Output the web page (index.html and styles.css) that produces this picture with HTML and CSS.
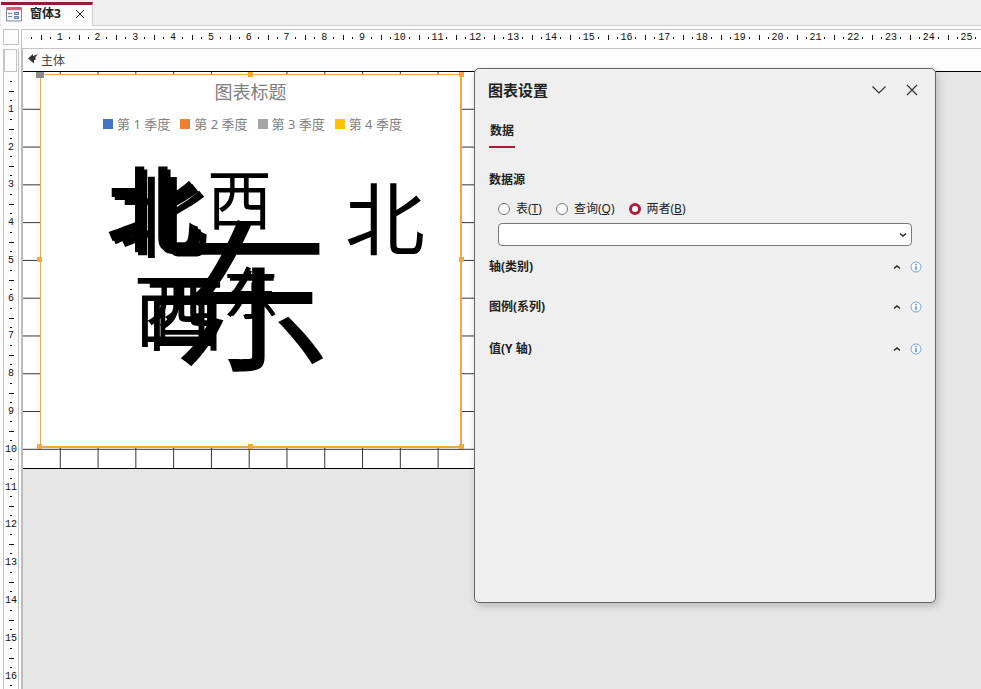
FILE: index.html
```html
<!DOCTYPE html>
<html lang="zh-CN">
<head>
<meta charset="utf-8">
<title>窗体3</title>
<link rel="stylesheet" href="styles.css">
</head>
<body>
<header class="tabs">
  <div class="tab">
    <svg class="form-icon" width="16" height="16" viewBox="0 0 16 16" aria-hidden="true">
      <path d="M.5 1.500h15v13.500H.5z" fill="#f4f4fb" stroke="#7f86a8"/>
      <path d="M1 1h14v3H1z" fill="#d0607c"/>
      <path d="M2 7.500h4M2 10.500h4" stroke="#7884b8"/>
      <path d="M8.500 6.500h4v2h-4zM8.500 10.500h4v2h-4z" fill="#c5cbea" stroke="#6672ad"/>
    </svg>
    <span class="tab-name">窗体3</span>
    <button class="icon-button tab-close" type="button" aria-label="关闭窗体">
      <svg width="10" height="10" viewBox="0 0 10 10"><path d="M1 1l8 8M9 1l-8 8" stroke="#222" fill="none"/></svg>
    </button>
  </div>
</header>
<main class="designer">
  <div class="corner"><span class="corner-box"></span></div>
  <div class="ruler-x" data-count="25"></div>
  <div class="ruler-side">
    <div class="section-selector"></div>
    <div class="ruler-y" data-count="16"></div>
  </div>
  <div class="workspace">
    <div class="section-bar">
      <svg width="10" height="10" viewBox="0 0 10 10" aria-hidden="true"><path d="M0 4.500L5 0v2L10 0 7.500 3v3H6v3.500z" fill="#333"/></svg>
      <span>主体</span>
    </div>
    <section class="detail">
      <div class="chart">
        <h2 class="chart-title">图表标题</h2>
        <ul class="legend">
          <li><i class="swatch blue"></i>第 1 季度</li>
          <li><i class="swatch orange"></i>第 2 季度</li>
          <li><i class="swatch gray"></i>第 3 季度</li>
          <li><i class="swatch gold"></i>第 4 季度</li>
        </ul>
        <div class="plot">
          <span class="label north-a">北</span>
          <span class="label north-b">北</span>
          <span class="label north-c">北</span>
          <span class="label north-d">北</span>
          <span class="label west-a">西</span>
          <span class="label west-b">西</span>
          <span class="label west-c">西</span>
          <span class="label west-d">西</span>
          <span class="label east-a">东</span>
          <span class="label east-b">东</span>
          <span class="label east-c">东</span>
        </div>
        <i class="handle move"></i>
        <i class="handle top"></i>
        <i class="handle top right"></i>
        <i class="handle middle left"></i>
        <i class="handle middle right"></i>
        <i class="handle bottom left"></i>
        <i class="handle bottom"></i>
        <i class="handle bottom right"></i>
      </div>
    </section>
    <aside class="panel">
      <div class="panel-head">
        <h1>图表设置</h1>
        <button class="icon-button" type="button" aria-label="折叠">
          <svg width="16" height="10" viewBox="0 0 16 10"><path d="M1.500 1.500L8 8l6.500-6.500" stroke="#333" stroke-width="1.200" fill="none"/></svg>
        </button>
        <button class="icon-button" type="button" aria-label="关闭">
          <svg width="12" height="12" viewBox="0 0 12 12"><path d="M1 1l10 10M11 1L1 11" stroke="#333" stroke-width="1.200" fill="none"/></svg>
        </button>
      </div>
      <button class="panel-tab" type="button">数据</button>
      <fieldset class="source">
        <legend>数据源</legend>
        <div class="choices">
          <label><input type="radio" name="source"><span>表(<u>T</u>)</span></label>
          <label><input type="radio" name="source"><span>查询(<u>Q</u>)</span></label>
          <label><input type="radio" name="source" checked><span>两者(<u>B</u>)</span></label>
        </div>
        <div class="select-wrap">
          <select aria-label="数据源"><option></option></select>
          <svg class="select-arrow" width="8" height="6" viewBox="0 0 8 6" aria-hidden="true"><path d="M1 1.500L4 4l3-2.500" stroke="#222" stroke-width="1.400" fill="none"/></svg>
        </div>
      </fieldset>
      <div class="groups">
        <div class="group">
          <h3>轴(类别)</h3>
          <button class="icon-button" type="button" aria-label="收起轴"><svg width="8" height="6" viewBox="0 0 8 6"><path d="M1 4.500L4 2l3 2.500" stroke="#222" stroke-width="1.400" fill="none"/></svg></button>
          <button class="icon-button" type="button" aria-label="轴信息"><svg width="12" height="12" viewBox="0 0 12 12"><circle cx="6" cy="6" r="5" fill="#f6faff" stroke="#7da5d6"/><path d="M6 3v1.300M6 5.200V9" stroke="#3d6fb0" stroke-width="1.200"/></svg></button>
        </div>
        <div class="group">
          <h3>图例(系列)</h3>
          <button class="icon-button" type="button" aria-label="收起图例"><svg width="8" height="6" viewBox="0 0 8 6"><path d="M1 4.500L4 2l3 2.500" stroke="#222" stroke-width="1.400" fill="none"/></svg></button>
          <button class="icon-button" type="button" aria-label="图例信息"><svg width="12" height="12" viewBox="0 0 12 12"><circle cx="6" cy="6" r="5" fill="#f6faff" stroke="#7da5d6"/><path d="M6 3v1.300M6 5.200V9" stroke="#3d6fb0" stroke-width="1.200"/></svg></button>
        </div>
        <div class="group">
          <h3>值(Y 轴)</h3>
          <button class="icon-button" type="button" aria-label="收起值"><svg width="8" height="6" viewBox="0 0 8 6"><path d="M1 4.500L4 2l3 2.500" stroke="#222" stroke-width="1.400" fill="none"/></svg></button>
          <button class="icon-button" type="button" aria-label="值信息"><svg width="12" height="12" viewBox="0 0 12 12"><circle cx="6" cy="6" r="5" fill="#f6faff" stroke="#7da5d6"/><path d="M6 3v1.300M6 5.200V9" stroke="#3d6fb0" stroke-width="1.200"/></svg></button>
        </div>
      </div>
    </aside>
  </div>
</main>
<script src="script.js"></script>
</body>
</html>
```
FILE: styles.css
```css
* { box-sizing: border-box; }

body {
  margin: 0;
  height: 100vh;
  display: flex;
  flex-direction: column;
  overflow: hidden;
  background: #fdfdfd;
  color: #222;
  font: 12px/16px "Noto Sans", "Noto Sans CJK SC", sans-serif;
}

h1, h2, h3, ul { margin: 0; padding: 0; }

.icon-button {
  display: grid;
  place-items: center;
  padding: 0;
  border: 0;
  background: none;
}

/* Document tabs */
.tabs {
  flex: none;
  display: flex;
  height: 26px;
  padding-top: 2px;
  background: #efefef;
  border-bottom: 1px solid #d0d0d0;
}
.tab {
  display: flex;
  align-items: center;
  width: 92px;
  height: 24px;
  margin-left: 1px;
  padding: 0 7px 4px 5px;
  background: #fdfdfd;
  border-top: 3px solid #8f1f35;
  border-right: 1px solid #d0d0d0;
}
.tab-name { margin-left: 8px; font-weight: 700; }
.tab-close { margin-left: auto; }

/* Design surface */
.designer {
  flex: 1;
  min-height: 0;
  display: grid;
  grid-template-columns: 21px 1fr;
  grid-template-rows: 23px 1fr;
}
.corner { padding: 3px 0 0 3px; }
.corner-box {
  display: block;
  width: 16px;
  height: 16px;
  border: 1px solid #c4c4c4;
}

.ruler-x, .ruler-y {
  display: flex;
  overflow: hidden;
  font: 10px/12px "Liberation Mono", monospace;
  color: #111;
}
.ruler-x {
  margin-top: 3px;
  padding: 0 0 3px .5cm;
  align-items: center;
  border: 1px solid #c4c4c4;
  border-right: 0;
  position: relative;
}
.ruler-x::before {
  content: "";
  position: absolute;
  left: .25cm;
  top: 7px;
  width: 1px;
  height: 2px;
  background: #111;
}
.mark {
  flex: none;
  display: flex;
  align-items: center;
  justify-content: space-between;
}
.ruler-x .mark { width: 1cm; height: 12px; }
.ruler-y .mark { height: 1cm; width: 14px; flex-direction: column; }
.mark b { font-weight: 400; flex: 1; text-align: center; }
.ruler-y .mark b { display: grid; place-items: center; }
.ruler-x .half { width: 1px; height: 5px; background: #111; }
.ruler-x .dot { width: 1px; height: 2px; margin-left: 8px; background: #111; }
.ruler-x b + .dot { margin: 0 9px 0 0; }
.ruler-y .half { width: 5px; height: 1px; background: #111; }
.ruler-y .dot { width: 2px; height: 1px; margin-top: 8px; background: #111; }
.ruler-y b + .dot { margin: 0 0 9px; }

.ruler-side {
  display: flex;
  flex-direction: column;
  width: 16px;
  min-height: 0;
  margin-left: 3px;
  border: 1px solid #c4c4c4;
  border-width: 0 1px;
}
.section-selector {
  flex: none;
  width: 13px;
  height: 23px;
  border: 1px solid #c4c4c4;
}
.ruler-y {
  flex: 1;
  flex-direction: column;
  padding-top: .5cm;
  position: relative;
}
.ruler-y::before {
  content: "";
  position: absolute;
  top: .25cm;
  left: 6px;
  width: 2px;
  height: 1px;
  background: #111;
}

.workspace {
  position: relative;
  min-width: 0;
  border-left: 2px solid #bdbdbd;
  background: #e6e6e6;
}
.section-bar {
  display: flex;
  align-items: center;
  gap: 3px;
  height: 22px;
  padding: 1px 0 0 5px;
  background: #fdfdfd;
  color: #444;
}
.section-bar svg { margin-bottom: 3px; }
.detail {
  position: relative;
  display: flow-root;
  border-top: 1px solid #000;
}
.detail::before {
  content: "";
  position: absolute;
  inset: 0 45% 0 0;
  border-bottom: 1px solid #000;
  background:
    linear-gradient(90deg, #333 1px, transparent 1px) -1px 0 / 1cm 1cm,
    linear-gradient(#333 1px, transparent 1px) 0 -1px / 1cm 1cm,
    #fff;
}

/* Chart object */
.chart {
  position: relative;
  width: 422px;
  min-height: 374px;
  margin: 2px 0 21px 17px;
  padding-top: 6px;
  background: #fff;
  border: 1px solid #f0a947;
  border-width: 1px 2px 2px 1px;
  color: #7f7f7f;
}
.chart-title {
  font-size: 18px;
  line-height: 22px;
  font-weight: 400;
  text-align: center;
}
.legend {
  display: flex;
  justify-content: center;
  gap: 10px;
  margin-top: 13px;
  padding-left: 4px;
  list-style: none;
  font-size: 13px;
  line-height: 16px;
}
.legend li { display: flex; align-items: center; gap: 4px; }
.swatch { width: 10px; height: 10px; }
.blue { background: #4472c4; }
.orange { background: #ed7d31; }
.gray { background: #a5a5a5; }
.gold { background: #ffc000; }

.label {
  position: absolute;
  color: #000;
  line-height: 1;
  font-family: "Noto Sans CJK SC", sans-serif;
}
.north-a { left: 65px; top: 82px; font-size: 94px; font-weight: 500; }
.north-b { left: 68px; top: 85px; font-size: 94px; font-weight: 500; }
.north-c { left: 78px; top: 92px; font-size: 90px; }
.north-d { left: 304px; top: 99px; font-size: 80px; }
.west-a { left: 166px; top: 89px; font-size: 65px; }
.west-b { left: 92px; top: 190px; font-size: 80px; }
.west-c { left: 104px; top: 194px; font-size: 80px; }
.west-d { left: 112px; top: 196px; font-size: 66px; }
.east-a { left: 128px; top: 131px; font-size: 164px; }
.east-b { left: 182px; top: 187px; font-size: 56px; }
.east-c { left: 185px; top: 191px; font-size: 52px; }

.handle {
  position: absolute;
  left: calc(50% - 3px);
  width: 5px;
  height: 5px;
  background: #f0a947;
}
.top { top: -3px; }
.middle { top: calc(50% - 4px); }
.bottom { bottom: -3px; }
.left { left: -4px; }
.right { left: auto; right: -4px; }
.move { top: -3px; left: -5px; width: 8px; height: 6px; background: #8a8a8a; }

/* Settings panel floats over the design surface */
.panel {
  position: absolute;
  top: 19px;
  right: 45px;
  bottom: 86px;
  left: 451px;
  padding: 11px 13px;
  background: #efefef;
  border: 1px solid #666;
  border-radius: 5px;
  box-shadow: 2px 3px 8px rgba(0, 0, 0, .2);
}
.panel-head {
  display: flex;
  align-items: center;
  gap: 19px;
  padding-right: 4px;
}
.panel-head h1 {
  flex: 1;
  font-size: 15px;
  line-height: 20px;
}
.panel-tab {
  display: block;
  margin: 23px 0 0 1px;
  padding: 0 1px 7px;
  border: 0;
  border-bottom: 2px solid #a01c37;
  background: none;
  color: inherit;
  font: inherit;
  font-weight: 700;
}
.source {
  min-width: 0;
  margin: 24px 10px 0 1px;
  padding: 0 0 0 9px;
  border: 0;
}
.source legend { margin-left: -9px; padding: 0; font-weight: 700; }
.choices { display: flex; gap: 14px; margin-top: 13px; }
.choices label { display: flex; align-items: center; gap: 6px; }
.choices input {
  appearance: none;
  width: 12px;
  height: 12px;
  margin: 0;
  border: 1px solid #777;
  border-radius: 50%;
  background: #fff;
}
.choices input:checked { border: 3px solid #b01e3c; }
.select-wrap { position: relative; margin-top: 6px; }
.select-wrap select {
  appearance: none;
  display: block;
  width: 100%;
  height: 23px;
  border: 1px solid #777;
  border-radius: 4px;
  background: #fff;
}
.select-arrow { position: absolute; right: 5px; top: 9px; }
.groups {
  display: grid;
  gap: 24px;
  margin: 13px 0 0 1px;
}
.group { display: flex; align-items: center; gap: 9px; }
.group:last-child { margin-top: 2px; }
.group h3 { flex: 1; font-size: 12px; line-height: 16px; }
```
FILE: script.js
```js
// Fill each ruler with one mark per centimetre.
document.querySelectorAll("[data-count]").forEach(function (ruler) {
  for (let n = 1; n <= Number(ruler.dataset.count); n++) {
    const mark = document.createElement("div");
    mark.className = "mark";
    mark.innerHTML = '<i class="half"></i><i class="dot"></i><b>' + n + '</b><i class="dot"></i>';
    ruler.append(mark);
  }
});
```
